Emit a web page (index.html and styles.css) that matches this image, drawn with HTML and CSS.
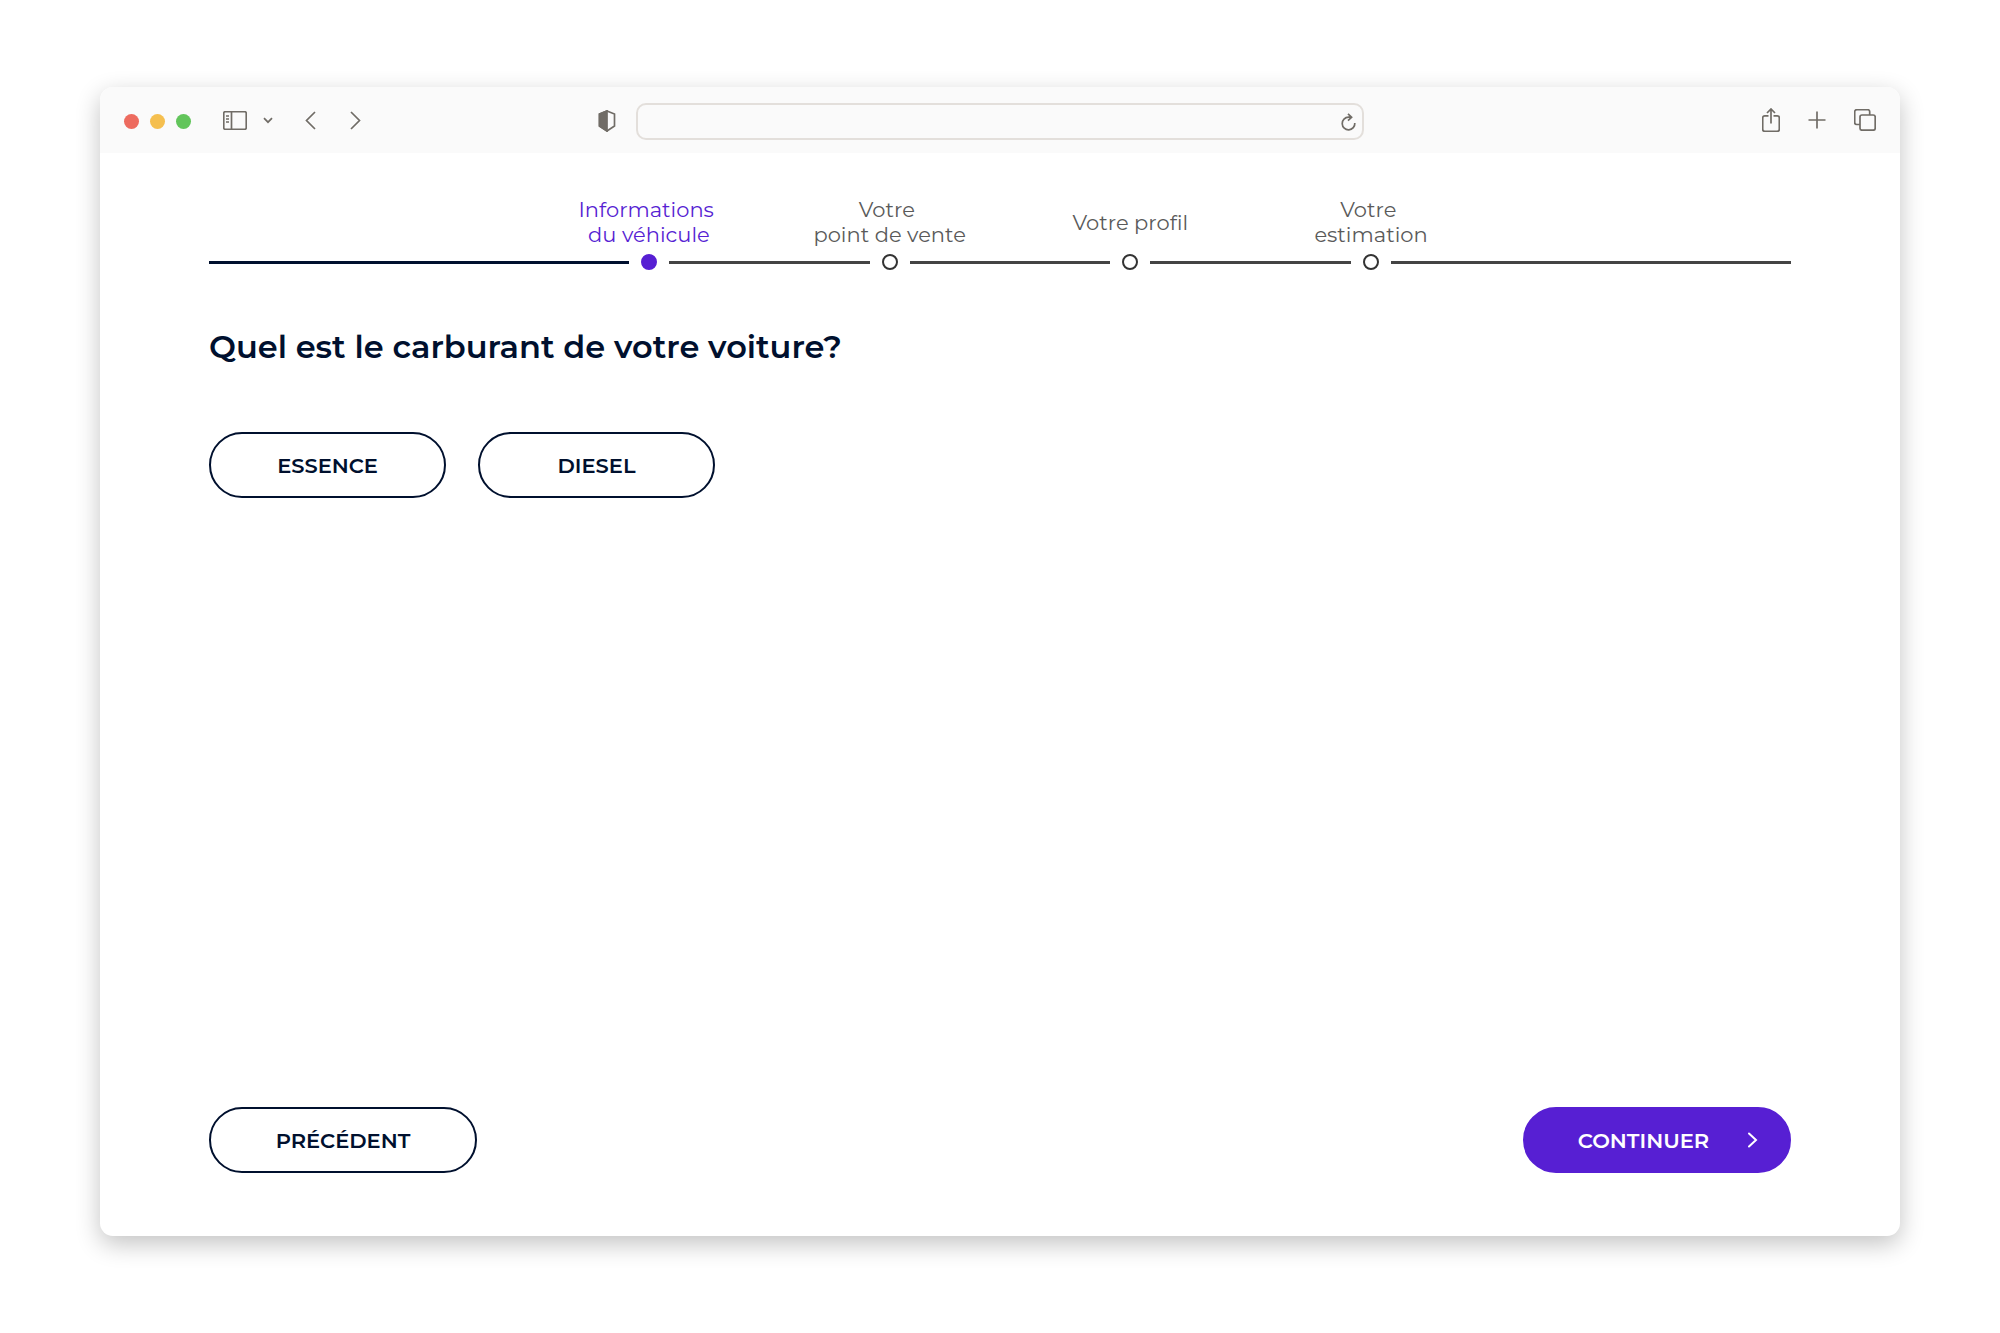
FILE: index.html
```html
<!DOCTYPE html>
<html lang="fr">
  <head>
    <meta charset="UTF-8" />
    <meta name="viewport" content="width=device-width, initial-scale=1.0" />
    <title>Estimation de votre voiture</title>
    <link rel="stylesheet" href="styles.css">
  </head>
  <body>
    <div class="window">
      <!-- Browser toolbar -->
      <header class="toolbar">
        <div class="toolbar-left">
          <div class="lights">
            <span class="light light-red"></span>
            <span class="light light-yellow"></span>
            <span class="light light-green"></span>
          </div>
          <div class="sidebar-tools">
            <button class="icon-button" type="button" aria-label="Barre latérale">
              <svg width="24" height="19" viewBox="0 0 24 19">
                <rect x="0.75" y="0.75" width="22.5" height="17.5" rx="1.5" />
                <path d="M8.5 1v17M3 5h3M3 8h3M3 11h3" />
              </svg>
            </button>
            <button class="icon-button" type="button" aria-label="Groupes d'onglets">
              <svg width="10" height="7" viewBox="0 0 10 7">
                <path d="M1 1.2l4 4 4-4" />
              </svg>
            </button>
          </div>
          <div class="history">
            <button class="icon-button" type="button" aria-label="Page précédente">
              <svg width="11" height="19" viewBox="0 0 11 19">
                <path d="M10 1L1.5 9.5 10 18" />
              </svg>
            </button>
            <button class="icon-button" type="button" aria-label="Page suivante">
              <svg width="11" height="19" viewBox="0 0 11 19">
                <path d="M1 1l8.5 8.5L1 18" />
              </svg>
            </button>
          </div>
          <button class="icon-button shield" type="button" aria-label="Confidentialité">
            <svg width="18" height="22" viewBox="0 0 18 22">
              <path d="M9 1l7.5 3v12L9 21 1.5 16V4z" />
              <path class="shield-fill" d="M9 1v20l-7.5-5V4z" />
            </svg>
          </button>
        </div>

        <div class="address">
          <input class="address-input" type="text" aria-label="Adresse" />
          <button class="icon-button" type="button" aria-label="Actualiser">
            <svg width="15" height="18" viewBox="0 0 15 18">
              <path d="M13.8 10a6.3 6.3 0 1 1-6.3-5.8H10M7 0.8l3.6 3.4L7 7.6" />
            </svg>
          </button>
        </div>

        <div class="toolbar-right">
          <button class="icon-button" type="button" aria-label="Partager">
            <svg width="18" height="24" viewBox="0 0 18 24">
              <path d="M6.5 7.8H2.7a2 2 0 0 0-2 2v11.5a2 2 0 0 0 2 2h12.6a2 2 0 0 0 2-2V9.8a2 2 0 0 0-2-2h-3.8M9 15.5V1M5 5l4-4 4 4" />
            </svg>
          </button>
          <button class="icon-button" type="button" aria-label="Nouvel onglet">
            <svg width="18" height="18" viewBox="0 0 18 18">
              <path d="M9 0.5v17M0.5 9h17" />
            </svg>
          </button>
          <button class="icon-button" type="button" aria-label="Tous les onglets">
            <svg width="22" height="22" viewBox="0 0 22 22">
              <rect x="6" y="6" width="15.2" height="15.2" rx="2" />
              <path d="M6 15.5H2.7a2 2 0 0 1-2-2V2.7a2 2 0 0 1 2-2h11a2 2 0 0 1 2 2V6" />
            </svg>
          </button>
        </div>
      </header>

      <main class="page">
        <!-- Progress steps -->
        <ol class="steps">
          <li class="step step-active" aria-current="step">
            <div class="step-label"><span>Informations&nbsp;<br />du véhicule</span></div>
            <div class="step-track"><span class="step-dot"></span></div>
          </li>
          <li class="step">
            <div class="step-label"><span>Votre&nbsp;<br />point de vente</span></div>
            <div class="step-track"><span class="step-dot"></span></div>
          </li>
          <li class="step">
            <div class="step-label"><span>Votre profil</span></div>
            <div class="step-track"><span class="step-dot"></span></div>
          </li>
          <li class="step">
            <div class="step-label"><span>Votre&nbsp;<br />estimation</span></div>
            <div class="step-track"><span class="step-dot"></span></div>
          </li>
        </ol>

        <h1 class="question">Quel est le carburant de votre voiture?</h1>

        <div class="choices">
          <button class="button button-choice" type="button">ESSENCE</button>
          <button class="button button-choice" type="button">DIESEL</button>
        </div>

        <footer class="actions">
          <button class="button button-nav" type="button">PRÉCÉDENT</button>
          <button class="button button-nav button-primary" type="button">
            CONTINUER
            <svg width="11" height="16" viewBox="0 0 11 16">
              <path d="M2 1.5L9 8l-7 6.5" />
            </svg>
          </button>
        </footer>
      </main>
    </div>
  </body>
</html>
```

FILE: styles.css
```css
* {
  box-sizing: border-box;
}

body {
  display: flex;
  min-height: 100vh;
  margin: 0;
  padding: 87px 5% 97px;
  background-color: #fff;
  color: #00102e;
  font-family: "Montserrat", "Inter", sans-serif;
}

button,
input {
  font-family: inherit;
}

.window {
  display: flex;
  flex: 1;
  flex-direction: column;
  overflow: hidden;
  border-radius: 13px;
  background-color: #fff;
  box-shadow: 0 8px 24px rgba(0, 0, 0, 0.24);
}

/* Browser toolbar */
.toolbar {
  display: grid;
  grid-template-columns: 512fr 728fr 512fr;
  align-items: center;
  height: 66px;
  padding: 0 24px;
  background-color: #fafafa;
}

.toolbar-left,
.lights,
.sidebar-tools,
.history,
.toolbar-right {
  display: flex;
  align-items: center;
}

.toolbar-left {
  gap: 32px;
}

.lights {
  gap: 11px;
  padding-top: 3px;
}

.light {
  width: 15px;
  height: 15px;
  border-radius: 50%;
}

.light-red {
  background-color: #ed6b5f;
}

.light-yellow {
  background-color: #f5bf4f;
}

.light-green {
  background-color: #62c55b;
}

.sidebar-tools {
  gap: 16px;
}

.history {
  gap: 34px;
}

.toolbar-right {
  justify-content: flex-end;
  gap: 28px;
}

.icon-button {
  display: flex;
  padding: 0;
  border: none;
  background: none;
  color: #706c66;
  cursor: pointer;
}

.icon-button svg {
  fill: none;
  stroke: currentColor;
  stroke-width: 1.7;
}

.icon-button.shield {
  margin: 2px 20px 0 auto;
}

.icon-button .shield-fill {
  fill: currentColor;
}

.address {
  display: flex;
  align-items: center;
  height: 37px;
  margin-top: 3px;
  padding-right: 6px;
  border: 2px solid #e3dfdb;
  border-radius: 10px;
}

.address-input {
  flex: 1;
  min-width: 0;
  height: 100%;
  border: none;
  outline: none;
  background: none;
  font-size: 18px;
}

/* Page content */
.page {
  display: flex;
  flex: 1;
  flex-direction: column;
  padding: 44px 109px 63px;
}

/* Progress steps, with a line running on past both ends */
.steps {
  display: flex;
  align-items: flex-end;
  margin: 0;
  padding: 0;
  list-style: none;
}

.steps::before,
.steps::after {
  content: "";
  flex: 300 1 0;
  height: 3px;
  margin-bottom: 6px;
  background-color: #444;
}

.steps::before {
  flex-grow: 320;
  background-color: #00102e;
}

.step {
  display: flex;
  flex: 241 1 0;
  flex-direction: column;
  gap: 7px;
  min-width: 0;
  color: #5a5a5a;
}

.step-label {
  display: flex;
  align-items: center;
  justify-content: center;
  min-height: 50px;
  font-size: 21px;
  font-weight: 400;
  line-height: 25px;
  text-align: center;
}

.step-track {
  display: flex;
  align-items: center;
  gap: 12px;
}

.step-track::before,
.step-track::after {
  content: "";
  flex: 1;
  height: 3px;
  background-color: #444;
}

.step-dot {
  width: 16px;
  height: 16px;
  border: 2px solid #333;
  border-radius: 50%;
}

.step-active {
  color: #571fd3;
}

.step-active .step-dot {
  border-color: #571fd3;
  background-color: #571fd3;
}

.step-active .step-track::before {
  background-color: #00102e;
}

.question {
  margin: 57px 0 0;
  font-size: 32px;
  font-weight: 600;
  line-height: 40px;
}

.choices {
  display: flex;
  gap: 32px;
  margin-top: 65px;
}

/* Buttons */
.button {
  display: flex;
  align-items: center;
  justify-content: center;
  height: 66px;
  border: 2px solid #00102e;
  border-radius: 33px;
  background-color: #fff;
  color: #00102e;
  font-size: 21px;
  font-weight: 600;
  cursor: pointer;
}

.button-choice {
  width: 237px;
}

.button-nav {
  width: 268px;
}

.button-primary {
  gap: 38px;
  padding-left: 28px;
  border-color: #571fd3;
  background-color: #571fd3;
  color: #fff;
}

.button-primary svg {
  fill: none;
  stroke: currentColor;
  stroke-width: 2;
  stroke-linecap: round;
}

.actions {
  display: flex;
  justify-content: space-between;
  margin-top: auto;
}
```
